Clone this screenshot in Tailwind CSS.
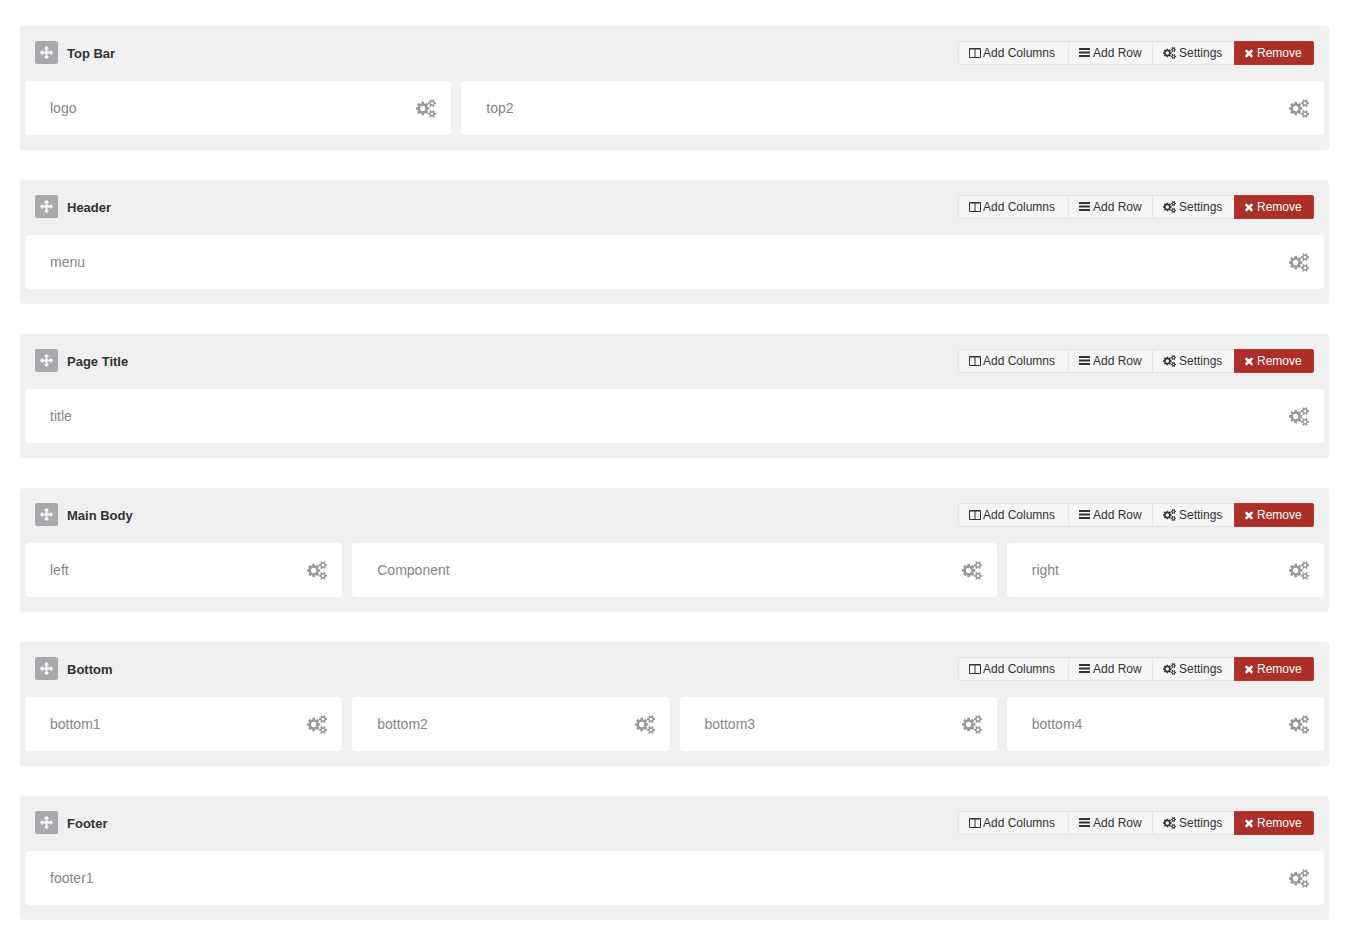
<!DOCTYPE html>
<html lang="en">
<head>
    <meta charset="UTF-8">
    <meta name="viewport" content="width=device-width, initial-scale=1.0">
    <title>Layout Builder</title>
    <script src="https://cdn.jsdelivr.net/npm/@tailwindcss/browser@4"></script>
</head>
<body class="bg-white font-['Liberation_Sans',Arial,sans-serif]">
    <!-- Icon set -->
    <svg class="hidden">
        <symbol id="icon-move" viewBox="0 0 1792 1792"><path d="M1792 896q0 26-19 45l-256 256q-19 19-45 19t-45-19-19-45v-128h-384v384h128q26 0 45 19t19 45-19 45l-256 256q-19 19-45 19t-45-19l-256-256q-19-19-19-45t19-45 45-19h128v-384h-384v128q0 26-19 45t-45 19-45-19l-256-256q-19-19-19-45t19-45l256-256q19-19 45-19t45 19 19 45v128h384v-384h-128q-26 0-45-19t-19-45 19-45l256-256q19-19 45-19t45 19l256 256q19 19 19 45t-19 45-45 19h-128v384h384v-128q0-26 19-45t45-19 45 19l256 256q19 19 19 45z"/></symbol>
        <symbol id="icon-columns" viewBox="0 0 12 12"><path fill-rule="evenodd" d="M1 1h10a1 1 0 0 1 1 1v8a1 1 0 0 1-1 1H1a1 1 0 0 1-1-1V2a1 1 0 0 1 1-1zM1 2.400V10h4.500V2.400zM6.500 2.400V10H11V2.400z"/></symbol>
        <symbol id="icon-bars" viewBox="0 0 11 12"><path d="M0 1h11v2H0zM0 4.500h11v2H0zM0 8h11v2H0z"/></symbol>
        <symbol id="icon-remove" viewBox="192 0 1408 1792"><path d="M1490 1322q0 40-28 68l-136 136q-28 28-68 28t-68-28l-294-294-294 294q-28 28-68 28t-68-28l-136-136q-28-28-28-68t28-68l294-294-294-294q-28-28-28-68t28-68l136-136q28-28 68-28t68 28l294 294 294-294q28-28 68-28t68 28l136 136q28 28 28 68t-28 68l-294 294 294 294q28 28 28 68z"/></symbol>
        <symbol id="icon-cogs" viewBox="0 0 1920 1792"><path d="M896 896q0-106-75-181t-181-75-181 75-75 181 75 181 181 75 181-75 75-181zm768 512q0-52-38-90t-90-38-90 38-38 90q0 53 37.5 90.5t90.5 37.5 90.5-37.5 37.5-90.5zm0-1024q0-52-38-90t-90-38-90 38-38 90q0 53 37.5 90.5t90.5 37.5 90.5-37.5 37.5-90.5zm-384 421v185q0 10-7 19.5t-16 10.5l-155 24q-11 35-32 76 34 48 90 115 7 11 7 20 0 12-7 19-23 30-82.5 89.5t-78.5 59.5q-11 0-21-7l-115-90q-37 19-77 31-11 108-23 155-7 24-30 24h-186q-11 0-20-7.5t-10-17.5l-23-153q-34-10-75-31l-118 89q-7 7-20 7-11 0-21-8-144-133-144-160 0-9 7-19 10-14 41-53t47-61q-23-44-35-82l-152-24q-10-1-17-9.5t-7-19.5v-185q0-10 7-19.5t16-10.5l155-24q11-35 32-76-34-48-90-115-7-11-7-20 0-12 7-20 22-30 82-89t79-59q11 0 21 7l115 90q34-18 77-32 11-108 23-154 7-24 30-24h186q11 0 20 7.5t10 17.5l23 153q34 10 75 31l118-89q8-7 20-7 11 0 21 8 144 133 144 160 0 8-7 19-12 16-42 54t-45 60q23 48 34 82l152 23q10 2 17 10.5t7 19.5zm640 533v140q0 16-149 31-12 27-30 52 51 113 51 138 0 4-4 7-122 71-124 71-8 0-46-47t-52-68q-20 2-30 2t-30-2q-14 21-52 68t-46 47q-2 0-124-71-4-3-4-7 0-25 51-138-18-25-30-52-149-15-149-31v-140q0-16 149-31 13-29 30-52-51-113-51-138 0-4 4-7 4-2 35-20t59-34 30-16q8 0 46 46.5t52 67.5q20-2 30-2t30 2q51-71 92-112l6-2q4 0 124 70 4 3 4 7 0 25-51 138 17 23 30 52 149 15 149 31zm0-1024v140q0 16-149 31-12 27-30 52 51 113 51 138 0 4-4 7-122 71-124 71-8 0-46-47t-52-68q-20 2-30 2t-30-2q-14 21-52 68t-46 47q-2 0-124-71-4-3-4-7 0-25 51-138-18-25-30-52-149-15-149-31v-140q0-16 149-31 13-29 30-52-51-113-51-138 0-4 4-7 4-2 35-20t59-34 30-16q8 0 46 46.5t52 67.5q20-2 30-2t30 2q51-71 92-112l6-2q4 0 124 70 4 3 4 7 0 25-51 138 17 23 30 52 149 15 149 31z"/></symbol>
    </svg>

    <main id="layout" class="flex flex-col gap-[30px] px-5 pt-[26px] pb-5"></main>

    <script>
        // Column width is a share of the 12 column grid
        const spans = {
            3: 'col-span-3',
            4: 'col-span-4',
            6: 'col-span-6',
            8: 'col-span-8',
            12: 'col-span-12'
        };

        const rows = [
            { name: 'Top Bar', columns: [['logo', 4], ['top2', 8]] },
            { name: 'Header', columns: [['menu', 12]] },
            { name: 'Page Title', columns: [['title', 12]] },
            { name: 'Main Body', columns: [['left', 3], ['Component', 6], ['right', 3]] },
            { name: 'Bottom', columns: [['bottom1', 3], ['bottom2', 3], ['bottom3', 3], ['bottom4', 3]] },
            { name: 'Footer', columns: [['footer1', 12]] }
        ];

        function renderColumn([name, span]) {
            return `
                <div class="${spans[span]} flex h-[54px] items-center justify-between rounded bg-white pr-[15px] pl-[25px]">
                    <span class="text-sm text-[#868686]">${name}</span>
                    <button type="button" aria-label="${name} settings" class="cursor-pointer text-[#999a9e]">
                        <svg class="h-[19px] w-5 fill-current"><use href="#icon-cogs"/></svg>
                    </button>
                </div>`;
        }

        function renderRow(row) {
            return `
                <section class="rounded bg-[#f0f0f0] px-[5px] py-[15px]">
                    <div class="mb-[14px] flex items-start justify-between px-[10px]">
                        <div class="flex items-start gap-[9px]">
                            <button type="button" aria-label="Move ${row.name}" class="flex size-[23px] cursor-move items-center justify-center rounded-xs bg-[#a8a9ad] text-white">
                                <svg class="size-[13px] fill-current"><use href="#icon-move"/></svg>
                            </button>
                            <h2 class="text-[13px] leading-[26px] font-bold text-[#333]">${row.name}</h2>
                        </div>
                        <div class="flex text-xs text-[#333]">
                            <button type="button" class="flex h-6 w-[110px] cursor-pointer items-center gap-[2px] rounded-l-xs border-y border-l border-[#e5e5e5] bg-[#f5f5f5] pl-[10px]">
                                <svg class="size-3 fill-current"><use href="#icon-columns"/></svg>Add Columns
                            </button>
                            <button type="button" class="flex h-6 w-[84px] cursor-pointer items-center gap-[3px] border-y border-l border-[#e5e5e5] bg-[#f5f5f5] pl-[10px]">
                                <svg class="h-3 w-[11px] fill-current"><use href="#icon-bars"/></svg>Add Row
                            </button>
                            <button type="button" class="flex h-6 w-[82px] cursor-pointer items-center gap-[3px] border-y border-l border-[#e5e5e5] bg-[#f5f5f5] pl-[10px]">
                                <svg class="h-3 w-[13px] fill-current"><use href="#icon-cogs"/></svg>Settings
                            </button>
                            <button type="button" class="flex h-6 w-[80px] cursor-pointer items-center gap-[3px] rounded-r-xs border border-[#bd362f] bg-[#ac2f28] pl-[9px] text-white">
                                <svg class="h-3 w-[10px] fill-current"><use href="#icon-remove"/></svg>Remove
                            </button>
                        </div>
                    </div>
                    <div class="grid grid-cols-12 gap-[10px]">${row.columns.map(renderColumn).join('')}
                    </div>
                </section>`;
        }

        document.getElementById('layout').innerHTML = rows.map(renderRow).join('');
    </script>
</body>
</html>
